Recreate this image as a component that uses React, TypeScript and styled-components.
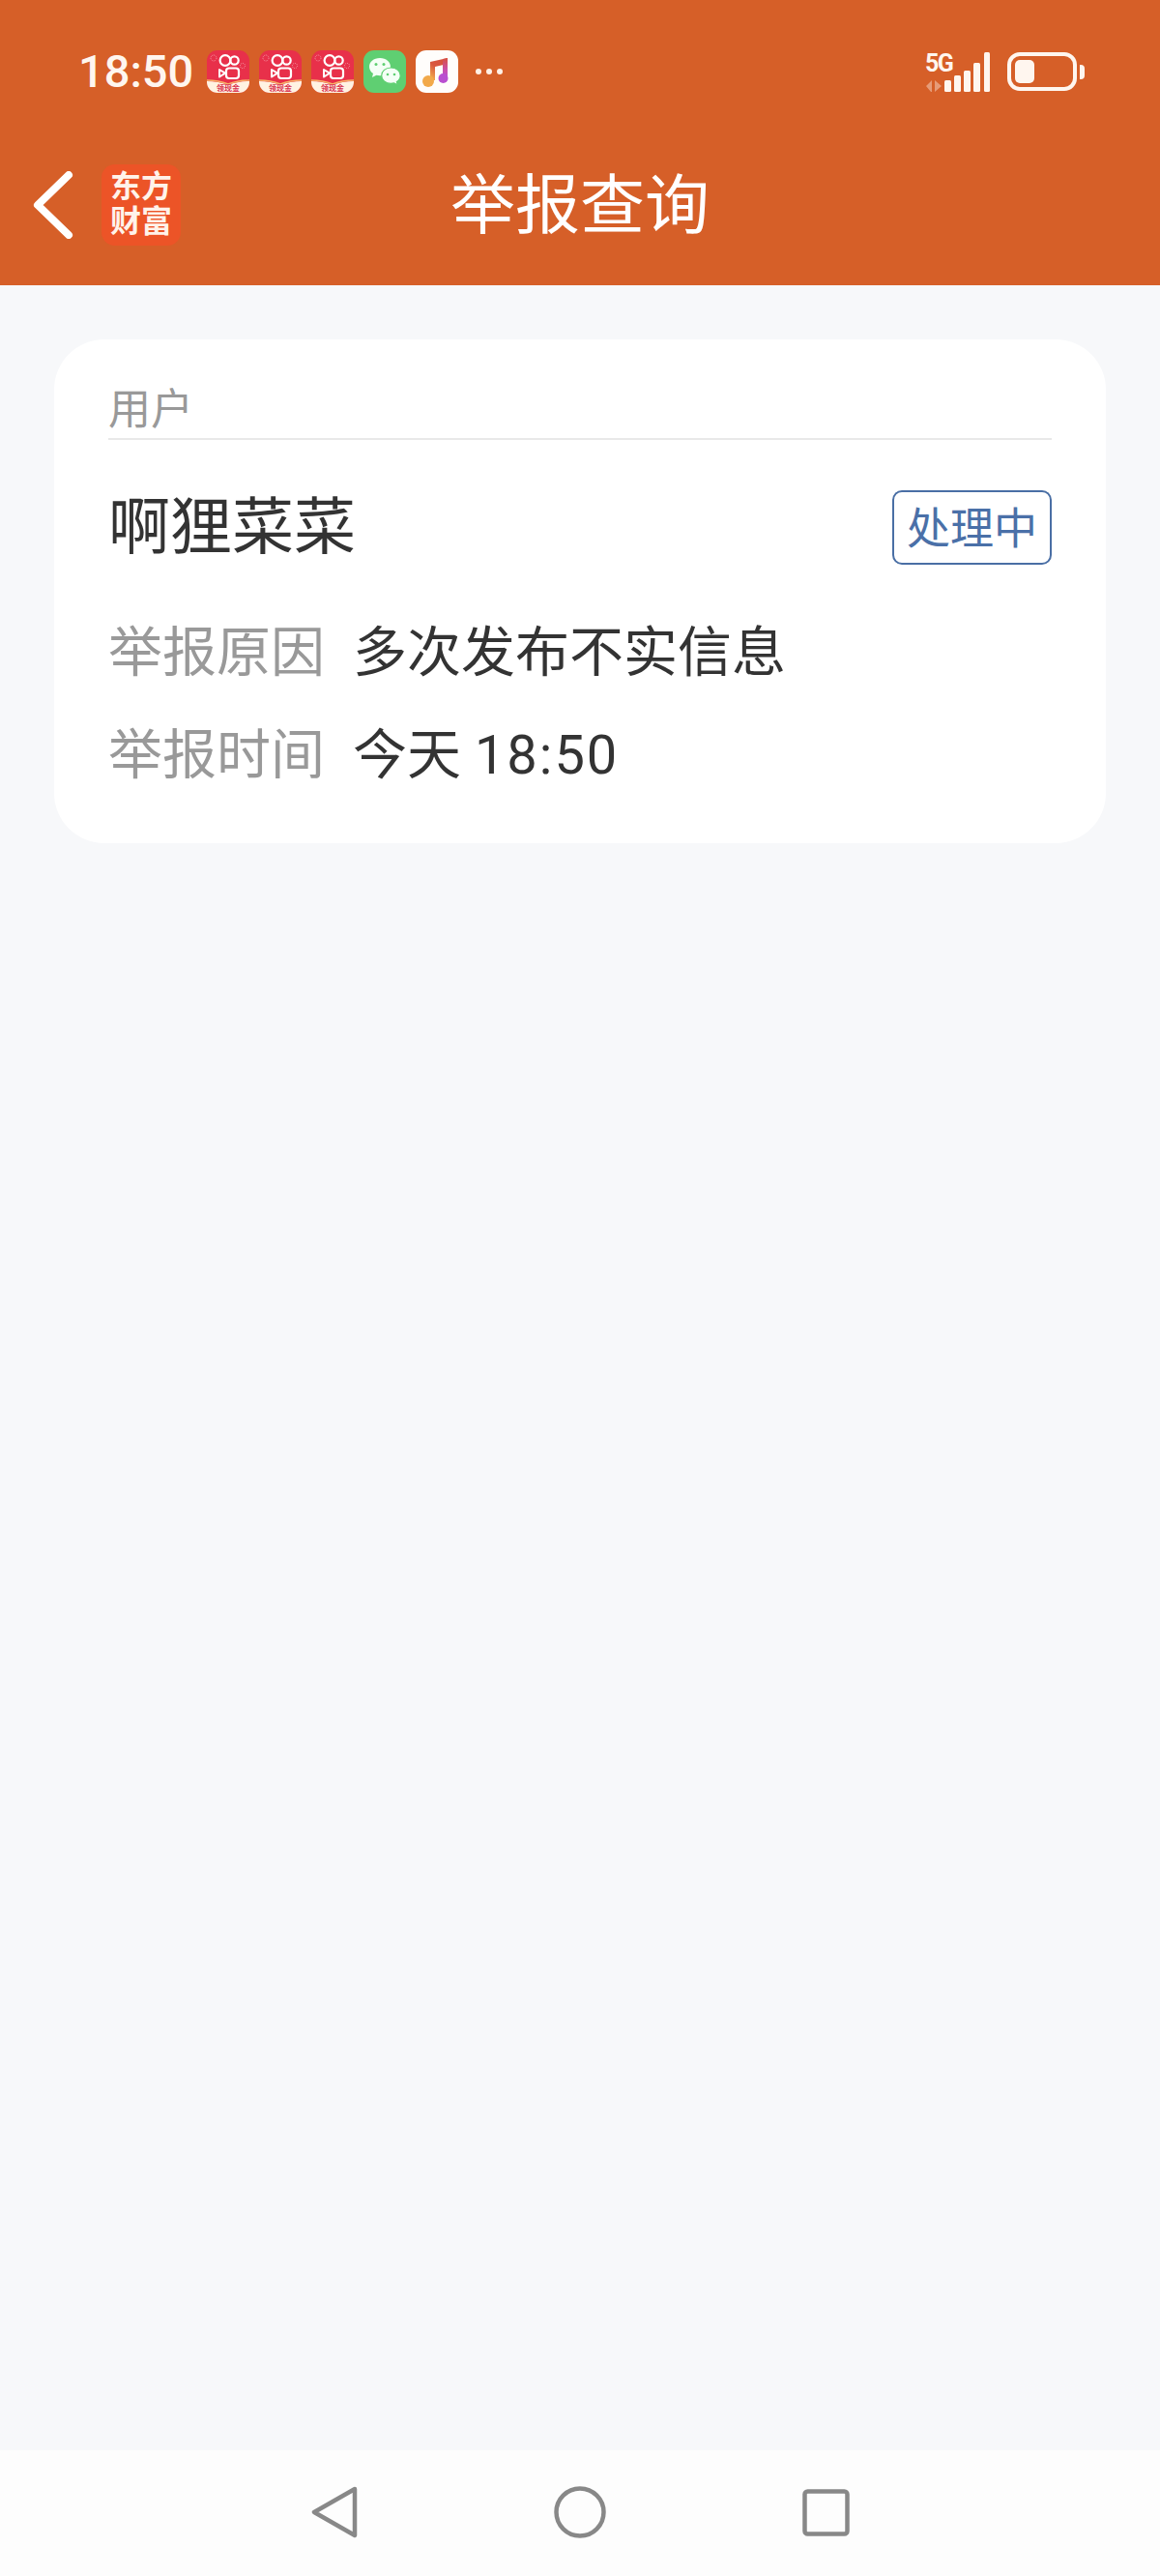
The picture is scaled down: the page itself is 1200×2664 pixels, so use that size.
import styled, { createGlobalStyle } from 'styled-components'

const GlobalStyle = createGlobalStyle`
  html, body {
    margin: 0;
    padding: 0;
    background: #f7f8fa;
  }
  body {
    font-family: Roboto, "Noto Sans CJK SC", sans-serif;
  }
`

const Page = styled.div`
  display: flex;
  flex-direction: column;
  width: 1200px;
  height: 2664px;
  overflow: hidden;
`

const Header = styled.header`
  height: 295px;
  background: #d65f28;
  color: #ffffff;
  flex-shrink: 0;
`

const StatusBar = styled.div`
  display: flex;
  align-items: center;
  justify-content: space-between;
  height: 44px;
  padding: 52px 78px 32px 81px;
`

const StatusLeft = styled.div`
  display: flex;
  align-items: center;
`

const Clock = styled.span`
  width: 133px;
  font-size: 47px;
  font-weight: 500;
  line-height: 44px;
  color: #fff6ef;
`

const AppIcons = styled.div`
  display: flex;
  gap: 10px;
`

const AppIcon = styled.svg`
  display: block;
  width: 44px;
  height: 44px;
`

const More = styled.div`
  display: flex;
  gap: 5px;
  margin-left: 18px;

  i {
    width: 6px;
    height: 6px;
    border-radius: 50%;
    background: #fff0e6;
  }
`

const StatusRight = styled.div`
  display: flex;
  align-items: center;
  gap: 17px;
`

const Network = styled.div`
  display: flex;
  align-items: flex-end;
  height: 42px;
`

const NetworkType = styled.div`
  display: flex;
  flex-direction: column;
  justify-content: space-between;
  width: 20px;
  height: 41px;
`

const NetworkLabel = styled.span`
  font-size: 25px;
  font-weight: 700;
  line-height: 24px;
  letter-spacing: -1.5px;
  white-space: nowrap;
  color: #fff6ef;
`

const DataArrows = styled.svg`
  display: block;
  width: 18px;
  height: 12px;
  fill: #fff6ef;
  opacity: 0.4;
`

const SignalBars = styled.svg`
  display: block;
  width: 48px;
  height: 41px;
  fill: #fff6ef;
`

const Battery = styled.div`
  display: flex;
  align-items: center;
  gap: 3px;
`

const BatteryBody = styled.div`
  box-sizing: border-box;
  width: 72px;
  height: 40px;
  padding: 4px;
  border: 4px solid #fff6ef;
  border-radius: 13px;
`

const BatteryLevel = styled.div`
  width: 20px;
  height: 100%;
  border-radius: 5px;
  background: #fff6ef;
`

const BatteryCap = styled.div`
  width: 5px;
  height: 15px;
  border-radius: 0 4px 4px 0;
  background: #fff6ef;
`

const TitleBar = styled.div`
  display: grid;
  grid-template-columns: 1fr auto 1fr;
  align-items: center;
  height: 167px;
`

const BackGroup = styled.div`
  display: flex;
  align-items: center;
  gap: 28px;
  padding-left: 34px;
`

const BackIcon = styled.svg`
  display: block;
  width: 43px;
  height: 70px;
`

const Logo = styled.div`
  width: 82px;
  height: 84px;
  padding-top: 5px;
  box-sizing: border-box;
  border-radius: 14px;
  background: #ec5427;
  font-size: 32px;
  font-weight: 700;
  line-height: 36px;
  text-align: center;
  color: #fff3ea;
`

const Title = styled.h1`
  margin: 0;
  padding-top: 2px;
  font-size: 67px;
  font-weight: 400;
  line-height: 80px;
  color: #ffffff;
`

const Main = styled.main`
  flex: 1;
  padding: 56px;
`

const Card = styled.section`
  box-sizing: border-box;
  height: 521px;
  padding: 40px 56px 41px;
  border-radius: 52px;
  background: #ffffff;
`

const SectionLabel = styled.div`
  height: 62px;
  border-bottom: 2px solid #e8e8e8;
  font-size: 44px;
  line-height: 67px;
  color: #999999;
`

const UserRow = styled.div`
  display: flex;
  align-items: center;
  justify-content: space-between;
  height: 77px;
  margin: 52px 0 35px;
`

const UserName = styled.span`
  font-size: 64px;
  line-height: 86px;
  color: #333333;
`

const StatusBadge = styled.span`
  box-sizing: border-box;
  width: 165px;
  height: 77px;
  border: 2px solid #4a6fa5;
  border-radius: 10px;
  font-size: 45px;
  line-height: 77px;
  text-align: center;
  color: #4a70a8;
`

const InfoRow = styled.div`
  display: flex;
  align-items: center;
  gap: 29px;
  box-sizing: border-box;
  height: 106px;
  padding-top: 5px;
  font-size: 56px;
  line-height: 66px;
`

const InfoLabel = styled.span`
  color: #999999;
`

const InfoValue = styled.span`
  color: #333333;
`

const InfoTime = styled.span`
  letter-spacing: 2px;
`

const NavBar = styled.nav`
  display: flex;
  align-items: center;
  justify-content: center;
  gap: 203px;
  height: 130px;
  padding-bottom: 2px;
  box-sizing: border-box;
  background: #fdfdfd;
  flex-shrink: 0;
`

const NavIcon = styled.svg`
  display: block;
  fill: none;
  stroke: #888888;
  stroke-width: 4.5;
  stroke-linejoin: round;
`

const KuaishouIcon = () => (
  <AppIcon viewBox="0 0 44 44">
    <rect width="44" height="44" rx="11" fill="#e8304a" />
    <path d="M0 32 Q12 32 22 36 Q32 32 44 32 V33 a11 11 0 0 1 -11 11 H11 a11 11 0 0 1 -11 -11 Z" fill="#fff3e2" />
    <path d="M0 31 Q12 31 22 35 Q32 31 44 31" fill="none" stroke="#f7b267" strokeWidth="1.4" />
    <circle cx="19" cy="10.5" r="5.4" fill="none" stroke="#fff" strokeWidth="2.2" />
    <circle cx="28.5" cy="10.5" r="4.2" fill="none" stroke="#fff" strokeWidth="2.2" />
    <rect x="20" y="18.5" width="13" height="10.5" rx="3" fill="none" stroke="#fff" strokeWidth="2.2" />
    <path d="M13 20 L19 23.7 L13 27.5 Z" fill="none" stroke="#fff" strokeWidth="2" strokeLinejoin="round" />
    <circle cx="7" cy="8" r="3" fill="none" stroke="#f59aa6" strokeWidth="1" strokeDasharray="1 1" />
    <circle cx="37" cy="16" r="2.6" fill="none" stroke="#f59aa6" strokeWidth="1" strokeDasharray="1 1" />
    <text x="22" y="41.5" fontSize="8" fontWeight="700" textAnchor="middle" fill="#d9304e">领现金</text>
  </AppIcon>
)

const WechatIcon = () => (
  <AppIcon viewBox="0 0 44 44">
    <rect width="44" height="44" rx="11" fill="#5fcf72" />
    <path d="M17 8 C10.4 8 6 12.3 6 17 c0 2.9 1.6 5.4 4 7 l-1 4 4.4 -2.3 c1.2 .3 2.4 .5 3.6 .5 C23.5 26.2 28 22 28 17 S23.5 8 17 8 Z" fill="#f4fff6" />
    <path d="M28.5 18 c-5.800 0 -9.800 3.700 -9.800 8.200 s4 8.200 9.800 8.200 c1.100 0 2.100 -.2 3.100 -.5 l3.700 2 -.9 -3.300 c2.300 -1.500 3.800 -3.800 3.800 -6.400 C38.200 21.700 34.200 18 28.500 18 Z" fill="#f4fff6" stroke="#5fcf72" strokeWidth="1.200" />
    <circle cx="13" cy="14.500" r="1.500" fill="#5fcf72" />
    <circle cx="21" cy="14.500" r="1.500" fill="#5fcf72" />
    <circle cx="25" cy="25" r="1.300" fill="#5fcf72" />
    <circle cx="32" cy="25" r="1.300" fill="#5fcf72" />
  </AppIcon>
)

const MusicIcon = () => (
  <AppIcon viewBox="0 0 44 44">
    <defs>
      <linearGradient id="note" x1="0.2" y1="1" x2="0.8" y2="0">
        <stop offset="0" stopColor="#f2a94a" />
        <stop offset="0.5" stopColor="#d9573f" />
        <stop offset="1" stopColor="#d8503e" />
      </linearGradient>
      <linearGradient id="noteRight" x1="0" y1="0" x2="0" y2="1">
        <stop offset="0" stopColor="#d8503e" />
        <stop offset="0.6" stopColor="#c94fb0" />
        <stop offset="1" stopColor="#b94fd0" />
      </linearGradient>
    </defs>
    <rect width="44" height="44" rx="11" fill="#fffdfb" />
    <path d="M15 12 L33 8 V14 L20 17 V31 H15 Z" fill="url(#note)" />
    <path d="M28 9 L33 8 V29 H28 Z" fill="url(#noteRight)" />
    <circle cx="13" cy="32" r="6" fill="#f2a94a" />
    <circle cx="28.500" cy="29" r="5" fill="#b94fd0" />
  </AppIcon>
)

const NetworkIcon = () => (
  <Network>
    <NetworkType>
      <NetworkLabel>5G</NetworkLabel>
      <DataArrows viewBox="0 0 18 12">
        <path d="M1 6 L7 0 V12 H6 Z M10 0 V12 L17 6 Z" />
      </DataArrows>
    </NetworkType>
    <SignalBars viewBox="0 0 48 41">
      <rect x="0" y="29" width="7" height="12" rx="1.500" />
      <rect x="10" y="24" width="7" height="17" rx="1.500" />
      <rect x="20" y="19" width="7" height="22" rx="1.500" />
      <rect x="30" y="11" width="7" height="30" rx="1.500" />
      <rect x="41" y="0" width="6" height="41" rx="1.500" />
    </SignalBars>
  </Network>
)

const App = () => {
  return (
    <Page>
      <GlobalStyle />
      <Header>
        <StatusBar>
          <StatusLeft>
            <Clock>18:50</Clock>
            <AppIcons>
              <KuaishouIcon />
              <KuaishouIcon />
              <KuaishouIcon />
              <WechatIcon />
              <MusicIcon />
            </AppIcons>
            <More><i /><i /><i /></More>
          </StatusLeft>
          <StatusRight>
            <NetworkIcon />
            <Battery>
              <BatteryBody><BatteryLevel /></BatteryBody>
              <BatteryCap />
            </Battery>
          </StatusRight>
        </StatusBar>
        <TitleBar>
          <BackGroup>
            <BackIcon viewBox="0 0 43 70">
              <path d="M37 4 L5 35 L37 66" fill="none" stroke="#fff" strokeWidth="8" strokeLinecap="round" strokeLinejoin="round" />
            </BackIcon>
            <Logo>东方<br />财富</Logo>
          </BackGroup>
          <Title>举报查询</Title>
        </TitleBar>
      </Header>
      <Main>
        <Card>
          <SectionLabel>用户</SectionLabel>
          <UserRow>
            <UserName>啊狸菜菜</UserName>
            <StatusBadge>处理中</StatusBadge>
          </UserRow>
          <InfoRow>
            <InfoLabel>举报原因</InfoLabel>
            <InfoValue>多次发布不实信息</InfoValue>
          </InfoRow>
          <InfoRow>
            <InfoLabel>举报时间</InfoLabel>
            <InfoValue>今天 <InfoTime>18:50</InfoTime></InfoValue>
          </InfoRow>
        </Card>
      </Main>
      <NavBar>
        <NavIcon width="48" height="54" viewBox="0 0 48 54">
          <path d="M45 3 L3 27 L45 51 Z" />
        </NavIcon>
        <NavIcon width="54" height="54" viewBox="0 0 54 54">
          <circle cx="27" cy="27" r="24.500" />
        </NavIcon>
        <NavIcon width="49" height="49" viewBox="0 0 49 49">
          <rect x="2.500" y="2.500" width="44" height="44" rx="3" />
        </NavIcon>
      </NavBar>
    </Page>
  )
}

export default App
